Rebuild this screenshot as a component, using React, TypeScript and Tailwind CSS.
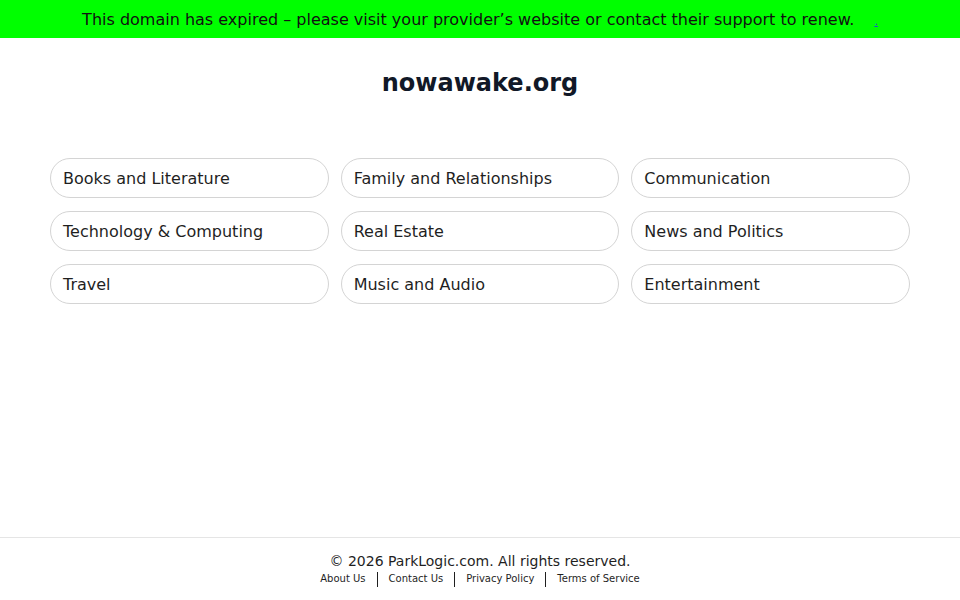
import React from 'react';

const categories = [
  'Books and Literature',
  'Family and Relationships',
  'Communication',
  'Technology & Computing',
  'Real Estate',
  'News and Politics',
  'Travel',
  'Music and Audio',
  'Entertainment',
];

const footerLinks = ['About Us', 'Contact Us', 'Privacy Policy', 'Terms of Service'];

const App: React.FC = () => {
  return (
    <div className="min-h-screen flex flex-col bg-white text-[#1a1a1a] font-['DejaVu_Sans',sans-serif]">
      <div className="h-[38px] bg-[#00ff00] flex items-center justify-center pt-[2px] text-[16px] text-[#111]">
        <span>This domain has expired – please visit your provider’s website or contact their support to renew.</span>
        <a href="#" className="ml-5 text-[#1d4ed8] underline text-[11px] pt-[4px]">.</a>
      </div>

      <main className="flex-1">
        <h1 className="mt-[30px] text-center text-[24px] font-bold text-[#111827] leading-[30px]">nowawake.org</h1>

        <div className="mx-[50px] mt-[60px] grid grid-cols-3 gap-x-[12px] gap-y-[13px]">
          {categories.map((c) => (
            <a
              key={c}
              href="#"
              className="h-[40px] flex items-center pl-[12px] pt-[2px] rounded-full border border-[#d4d4d4] text-[16px] text-[#1f1f1f]"
            >
              {c}
            </a>
          ))}
        </div>
      </main>

      <footer className="h-[63px] border-t border-[#e5e5e5] flex flex-col items-center pt-[14px]">
        <p className="text-[14px] leading-[18px] text-[#1f1f1f]">© 2026 ParkLogic.com. All rights reserved.</p>
        <div className="flex items-center mt-[1px] text-[10px] leading-[16px] text-[#1f1f1f]">
          {footerLinks.map((l, i) => (
            <React.Fragment key={l}>
              {i > 0 && <span className="mx-[11px] h-[15px] w-px bg-[#1f1f1f]" />}
              <a href="#">{l}</a>
            </React.Fragment>
          ))}
        </div>
      </footer>
    </div>
  );
};

export default App;
